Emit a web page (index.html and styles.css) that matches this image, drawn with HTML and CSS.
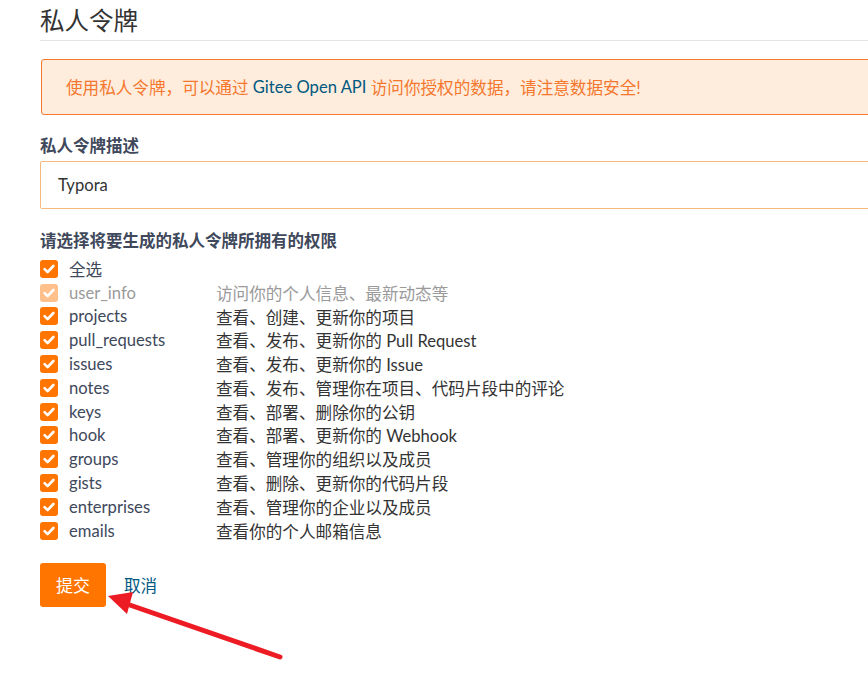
FILE: index.html
```html
<!DOCTYPE html>
<html lang="zh-CN">
<head>
<meta charset="utf-8">
<title>私人令牌</title>
<link rel="stylesheet" href="styles.css">
</head>
<body>
<div class="page">
  <h1 class="title">私人令牌</h1>
  <div class="alert">使用私人令牌，可以通过 <span class="api">Gitee Open API</span> 访问你授权的数据，请注意数据安全!</div>

  <div class="field">
    <label class="field-label">私人令牌描述</label>
    <div class="input">Typora</div>
  </div>

  <div class="field perms">
    <div class="field-label">请选择将要生成的私人令牌所拥有的权限</div>
    <ul class="perm-list">
      <li class="perm"><span class="cb"><svg viewBox="0 0 18 18"><path d="M4.6 9.2l3 3 5.8-6.2"/></svg></span><span class="name">全选</span></li>
      <li class="perm disabled"><span class="cb"><svg viewBox="0 0 18 18"><path d="M4.6 9.2l3 3 5.8-6.2"/></svg></span><span class="name">user_info</span><span class="desc">访问你的个人信息、最新动态等</span></li>
      <li class="perm"><span class="cb"><svg viewBox="0 0 18 18"><path d="M4.6 9.2l3 3 5.8-6.2"/></svg></span><span class="name">projects</span><span class="desc">查看、创建、更新你的项目</span></li>
      <li class="perm"><span class="cb"><svg viewBox="0 0 18 18"><path d="M4.6 9.2l3 3 5.8-6.2"/></svg></span><span class="name">pull_requests</span><span class="desc">查看、发布、更新你的 Pull Request</span></li>
      <li class="perm"><span class="cb"><svg viewBox="0 0 18 18"><path d="M4.6 9.2l3 3 5.8-6.2"/></svg></span><span class="name">issues</span><span class="desc">查看、发布、更新你的 Issue</span></li>
      <li class="perm"><span class="cb"><svg viewBox="0 0 18 18"><path d="M4.6 9.2l3 3 5.8-6.2"/></svg></span><span class="name">notes</span><span class="desc">查看、发布、管理你在项目、代码片段中的评论</span></li>
      <li class="perm"><span class="cb"><svg viewBox="0 0 18 18"><path d="M4.6 9.2l3 3 5.8-6.2"/></svg></span><span class="name">keys</span><span class="desc">查看、部署、删除你的公钥</span></li>
      <li class="perm"><span class="cb"><svg viewBox="0 0 18 18"><path d="M4.6 9.2l3 3 5.8-6.2"/></svg></span><span class="name">hook</span><span class="desc">查看、部署、更新你的 Webhook</span></li>
      <li class="perm"><span class="cb"><svg viewBox="0 0 18 18"><path d="M4.6 9.2l3 3 5.8-6.2"/></svg></span><span class="name">groups</span><span class="desc">查看、管理你的组织以及成员</span></li>
      <li class="perm"><span class="cb"><svg viewBox="0 0 18 18"><path d="M4.6 9.2l3 3 5.8-6.2"/></svg></span><span class="name">gists</span><span class="desc">查看、删除、更新你的代码片段</span></li>
      <li class="perm"><span class="cb"><svg viewBox="0 0 18 18"><path d="M4.6 9.2l3 3 5.8-6.2"/></svg></span><span class="name">enterprises</span><span class="desc">查看、管理你的企业以及成员</span></li>
      <li class="perm"><span class="cb"><svg viewBox="0 0 18 18"><path d="M4.6 9.2l3 3 5.8-6.2"/></svg></span><span class="name">emails</span><span class="desc">查看你的个人邮箱信息</span></li>
    </ul>
  </div>

  <div class="actions">
    <button class="btn-submit">提交</button>
    <a class="cancel">取消</a>
  </div>

  <svg class="arrow" width="868" height="700" viewBox="0 0 868 700">
    <line x1="280" y1="657" x2="124" y2="603" stroke="#ed1c24" stroke-width="5" stroke-linecap="round"/>
    <polygon points="108,596 133,592 127,614" fill="#ed1c24"/>
  </svg>
</div>
</body>
</html>
```

FILE: styles.css
```css
html, body {
  margin: 0;
  padding: 0;
  background: #fff;
  overflow: hidden;
}
body {
  font-family: "Lato", "Noto Sans CJK SC", sans-serif;
  font-size: 16.6px;
  color: #40485b;
}
.page {
  position: relative;
  width: 860px;
  padding-left: 40px;
  height: 700px;
}
.title {
  margin: 0;
  padding-top: 6px;
  padding-bottom: 4px;
  font-size: 24.5px;
  font-weight: 400;
  line-height: 30px;
  color: #333;
  border-bottom: 1px solid #e3e3e3;
}
.alert {
  margin-top: 18px;
  margin-left: 1px;
  height: 54px;
  display: flex;
  align-items: center;
  padding: 0 24px;
  background: #feeddd;
  border: 1px solid #f5772d;
  border-radius: 3px;
  color: #f5772d;
  white-space: pre;
}
.alert .api {
  color: #005980;
}
.field {
  margin-top: 20px;
}
.field-label {
  display: block;
  font-weight: 700;
  font-size: 16.5px;
  line-height: 22px;
  color: #40485b;
}
.input {
  margin-top: 4px;
  height: 46px;
  border: 1px solid #f8b97c;
  border-radius: 2px;
  display: flex;
  align-items: center;
  padding-left: 17px;
  color: #333;
}
.perms {
  margin-top: 21px;
}
.perm-list {
  list-style: none;
  margin: 5px 0 0;
  padding: 0;
}
.perm {
  display: flex;
  align-items: center;
  height: 23.8px;
  color: #40485b;
}
.cb {
  width: 18px;
  height: 18px;
  border-radius: 3px;
  background: #ff7500;
  flex: none;
  margin-right: 11px;
  display: flex;
}
.cb svg {
  width: 18px;
  height: 18px;
  fill: none;
  stroke: #fff;
  stroke-width: 2.6;
  stroke-linecap: round;
  stroke-linejoin: round;
}
.name {
  width: 147px;
  flex: none;
}
.desc {
  color: #333;
  white-space: nowrap;
}
.disabled .cb {
  background: #ffc08c;
}
.disabled .name,
.disabled .desc {
  color: #9a9a9a;
}
.actions {
  margin-top: 20px;
  display: flex;
  align-items: center;
  gap: 18px;
}
.btn-submit {
  width: 66px;
  height: 44px;
  border: none;
  border-radius: 3px;
  background: #ff7500;
  color: #fff;
  font-family: inherit;
  font-size: 17px;
  padding: 0;
}
.cancel {
  color: #005980;
}
.arrow {
  position: absolute;
  left: 0;
  top: 0;
  pointer-events: none;
}
```
